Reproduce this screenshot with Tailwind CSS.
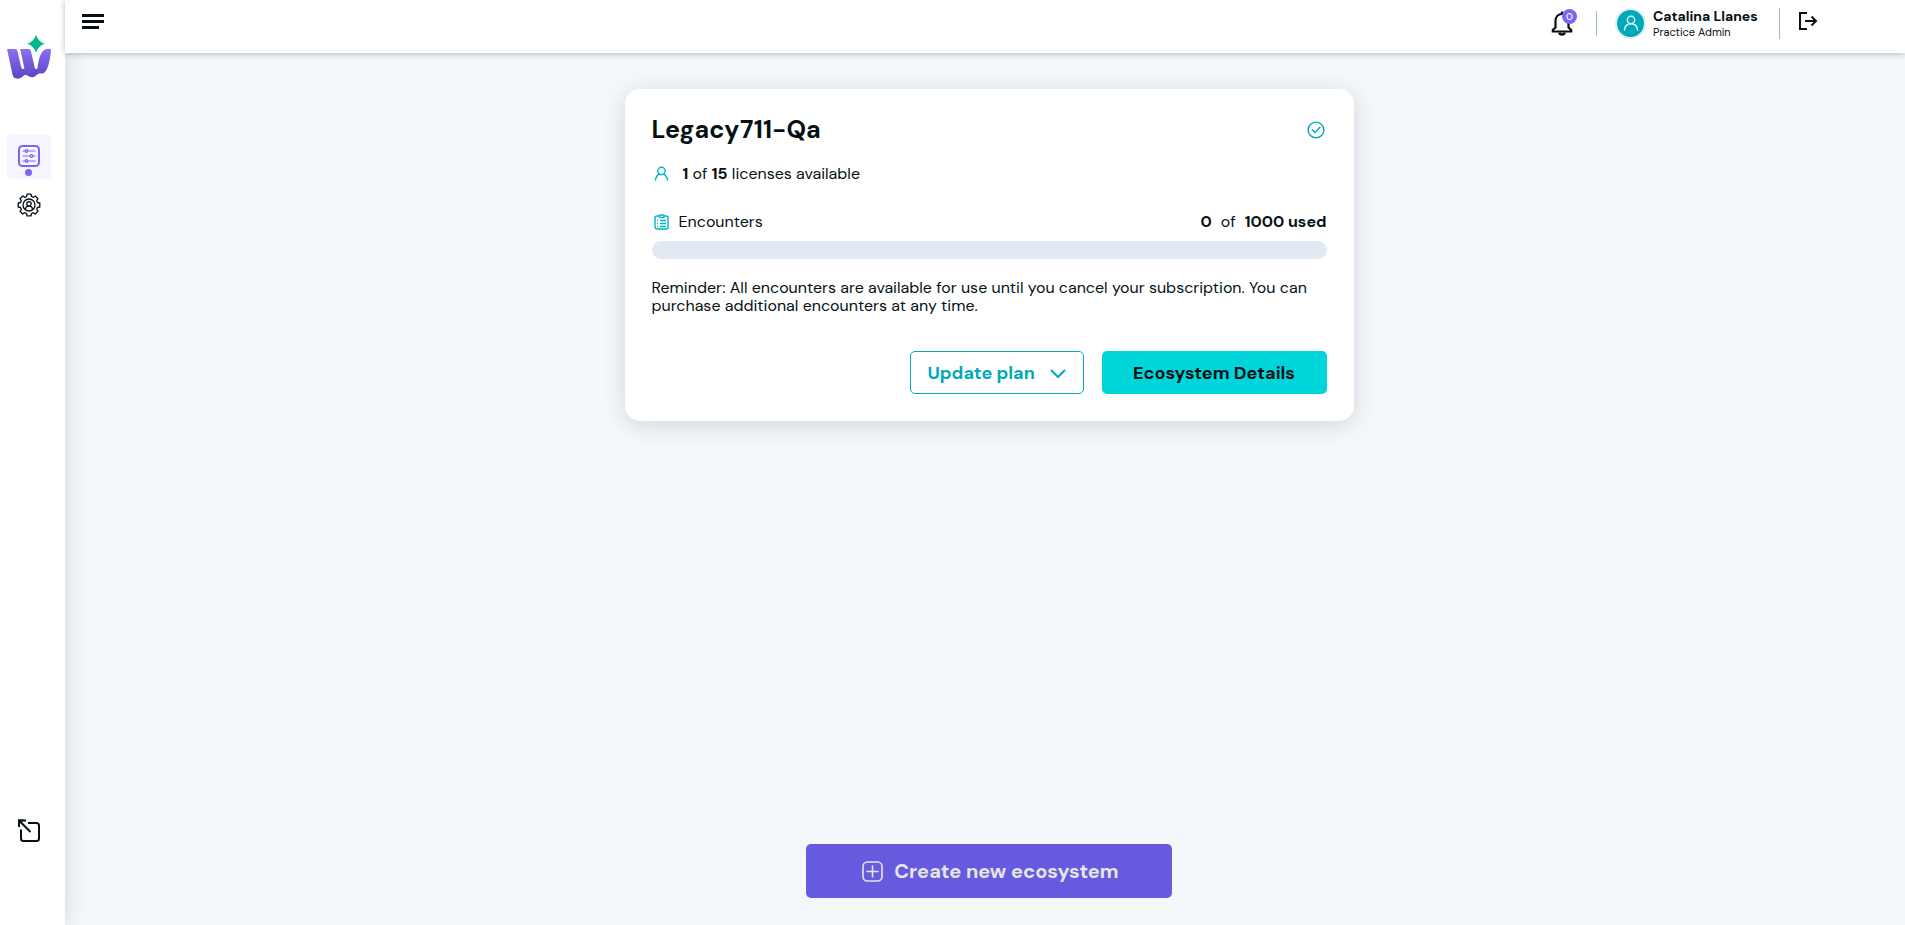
<!DOCTYPE html>
<html lang="en">
<head>
<meta charset="utf-8">
<meta name="viewport" content="width=device-width, initial-scale=1">
<title>Ecosystems</title>
<script src="https://cdn.jsdelivr.net/npm/@tailwindcss/browser@4"></script>
</head>
<body class="flex min-h-screen bg-[#f4f8fb] font-['DM_Sans','Inter',sans-serif] text-[#051114] antialiased">

<aside class="relative z-10 flex w-[65px] shrink-0 flex-col items-center bg-white pt-[34px] pb-[83px] shadow-[0_0_24px_rgba(5,17,20,0.14)]">
  <a href="#" aria-label="Home" class="block">
    <svg class="-ml-2 h-[46px] w-[46px]" viewBox="0 0 46 46">
      <defs><linearGradient id="brand" x1="0" y1="0" x2="0" y2="1"><stop offset="0" stop-color="#8a72f2"/><stop offset="1" stop-color="#6040c4"/></linearGradient></defs>
      <path fill="url(#brand)" d="M1 15H9.500Q11 15 11.400 17L15.300 33.500C15.700 35.300 17.800 35.200 18.400 34.400L14.200 15H23Q24.500 15 24.900 17L28.700 33.500C29.100 35.500 31 35.500 31.600 34C32.500 25 35 15 41 15H45C44.500 24 42.500 34.500 38.500 38.500C36.500 40.500 34 38.500 32 40C29.500 42 28 43.700 25.200 43.200C22.500 42.700 21 41 19.500 40.800C17.500 41 16 44.700 11.500 44.700C8.200 44.700 7 42.500 6.500 40.500Z"/>
      <path fill="#00b88e" d="M30 1C31.500 5.500 34.500 8.400 38.700 9.700C34.500 11 31.500 14 30 18.500C28.500 14 25.500 11 21.300 9.700C25.500 8.400 28.500 5.500 30 1Z"/>
    </svg>
  </a>
  <nav aria-label="Main" class="mr-2 mt-[54px] flex flex-1 flex-col items-center">
    <a href="#" aria-label="Ecosystems" aria-current="page" class="flex h-[45px] w-11 flex-col items-center gap-0.5 rounded bg-[#f6f4ff] pt-[11px]">
      <svg class="h-[22px] w-[22px] shrink-0" viewBox="0 0 22 22" fill="none" stroke="#7766f7" stroke-width="1.200" stroke-linecap="round"><rect x="1" y="1" width="20" height="20" rx="3.500" stroke-width="2"/><path d="M5 6h3M10 6h7M5 11h7M15 11h2M5 16h3M10 16h7"/><circle cx="8.500" cy="6" r="1.300"/><circle cx="13.500" cy="11" r="1.300"/><circle cx="8.500" cy="16" r="1.300"/></svg>
      <span class="h-[7px] w-[7px] shrink-0 rounded-full bg-[#7766f7]"></span>
    </a>
    <a href="#" aria-label="Settings" class="mt-[14px] block">
      <svg class="h-6 w-6" viewBox="-12 -12 24 24" fill="none" stroke="#051114" stroke-width="1.300" stroke-linejoin="round">
        <path d="M-2.500-8.500L-2-10.800H2L2.500-8.500L4.300-7.700L6.300-9L9-6.300L7.700-4.300L8.500-2.500L10.800-2V2L8.500 2.500L7.700 4.300L9 6.300L6.300 9L4.300 7.700L2.500 8.500L2 10.800H-2L-2.500 8.500L-4.300 7.700L-6.300 9L-9 6.300L-7.700 4.300L-8.500 2.500L-10.800 2V-2L-8.500-2.500L-7.700-4.300L-9-6.300L-6.300-9L-4.300-7.700Z"/>
        <circle r="6"/><circle cy="-1.200" r="2.200"/><path d="M-3.300 4.800V3.800Q-3.300 1.200 0 1.200T3.300 3.800V4.800"/>
      </svg>
    </a>
  </nav>
  <button type="button" aria-label="Leave workspace" class="mr-2 block">
    <svg class="h-6 w-6" viewBox="0 0 24 24" fill="none" stroke="#051114" stroke-width="2"><path d="M11 5H19.500Q22 5 22 7.500V20.500Q22 23 19.500 23H6.500Q4 23 4 20.500V11.500M13.500 14L2 2.500"/><path d="M2 9V2.500H9"/><path d="M1 1.500H7L1 7.500Z" fill="#051114" stroke="none"/></svg>
  </button>
</aside>

<div class="flex min-w-0 flex-1 flex-col">
  <header class="relative z-20 flex h-[53px] items-start bg-white pr-[87px] pl-[17px] shadow-[0_1px_6px_rgba(5,17,20,0.28)]">
    <button type="button" aria-label="Toggle menu" class="mt-[14px] flex flex-col gap-[3px]">
      <span class="h-[3px] w-[22px] bg-[#051114]"></span><span class="h-[3px] w-[22px] bg-[#051114]"></span><span class="h-[3px] w-[17px] bg-[#051114]"></span>
    </button>
    <div class="ml-auto flex h-[46px] items-center">
      <button type="button" aria-label="Notifications" class="relative">
        <svg class="h-[26px] w-[22px]" viewBox="0 0 22 26" fill="none" stroke="#051114" stroke-width="2.200"><path d="M1.800 21.500V20L4.500 17.500V11.500C4.500 6.500 7.500 4 11 4S17.500 6.500 17.500 11.500V17.500L20.200 20V21.500Z"/><path d="M11 1.500V4"/><path d="M8.500 22.500A2.500 2 0 0 0 13.500 22.500" stroke-width="2.500"/></svg>
        <span class="absolute -top-[1px] -right-[4px] flex h-[15px] w-[15px] items-center justify-center rounded-full bg-[#7766f7] text-[10px] leading-none font-medium text-white">0</span>
      </button>
      <span class="ml-[23px] h-[25px] w-px bg-[#9db9c8]"></span>
      <button type="button" class="ml-[18px] flex items-center text-left">
        <span class="flex h-[31px] w-[31px] items-center justify-center rounded-full border-2 border-[#e4eef3] bg-[#00a9b8]">
          <svg class="h-4 w-4" viewBox="0 0 16 16" fill="none" stroke="#e9fbfc" stroke-width="1.400" stroke-linecap="round"><circle cx="8" cy="5" r="3.700"/><path d="M1.500 15Q2 8.700 8 8.700T14.500 15"/></svg>
        </span>
        <span class="ml-[7px] w-[109px] whitespace-nowrap">
          <span class="block text-sm leading-[18px] font-bold">Catalina Llanes</span>
          <span class="block text-[11px] leading-[14px]">Practice Admin</span>
        </span>
      </button>
      <span class="ml-[17px] h-[31px] w-px bg-[#9db9c8]"></span>
      <button type="button" aria-label="Log out" class="mb-1 ml-[18px]">
        <svg class="h-5 w-5" viewBox="0 0 20 20" fill="none" stroke="#051114" stroke-width="2"><path d="M9 2H2V18H9M7 10H17M13.500 5.500L18 10L13.500 14.500"/></svg>
      </button>
    </div>
  </header>

  <main class="flex flex-1 flex-col items-center justify-between pt-9 pb-[27px] pl-2">
    <section class="w-full max-w-[729px] rounded-[15px] bg-white px-[27px] pt-[25px] pb-[27px] shadow-[0_4px_24px_rgba(5,17,20,0.14)]">
      <div class="flex items-center justify-between">
        <h1 class="text-[25px] leading-8 font-bold">Legacy711-Qa</h1>
        <svg class="mr-0.5 h-[18px] w-[18px]" viewBox="0 0 18 18" fill="none" stroke="#00a9b8" stroke-width="1.400"><circle cx="9" cy="9" r="7.900"/><path d="M5.300 8.700L8 11.500L13 6.300" stroke-linecap="round"/></svg>
      </div>
      <p class="mt-4 flex items-center text-base leading-6">
        <svg class="mr-[14px] ml-0.5 h-4 w-[15px]" viewBox="0 0 15 16" fill="none" stroke="#00b5c4" stroke-width="1.400" stroke-linecap="round"><circle cx="7.500" cy="5" r="3.700"/><path d="M1.500 14C2 10.500 4 8.700 5.500 8M9.500 8C11 8.700 13 10.500 13.500 14"/></svg>
        <span><b>1</b> of <b>15</b> licenses available</span>
      </p>
      <div class="mt-6 flex items-center text-base leading-6">
        <svg class="mr-2.5 ml-0.5 h-4 w-[15px]" viewBox="0 0 15 16" fill="none" stroke="#00b5c4" stroke-width="1.400"><rect x="1" y="2" width="13" height="13" rx="2"/><rect x="5" y="1" width="5" height="2.500" rx="1" fill="#fff"/><path d="M6 6.500h6M6 9.500h6M6 12.500h6M3 6.500h1M3 9.500h1M3 12.500h1"/></svg>
        <span id="usage">Encounters</span>
        <span class="ml-auto flex gap-[9px]"><b>0</b><span>of</span><b>1000 used</b></span>
      </div>
      <div role="progressbar" aria-labelledby="usage" aria-valuemin="0" aria-valuenow="0" aria-valuemax="1000" class="mt-[7px] h-[18px] rounded-full bg-[#e1eaf2]"></div>
      <p class="mt-5 text-base leading-[18px]">Reminder: All encounters are available for use until you cancel your subscription. You can purchase additional encounters at any time.</p>
      <div class="mt-9 flex justify-end gap-[18px] text-lg font-bold">
        <button type="button" aria-haspopup="menu" class="flex h-[43px] w-[174px] items-center justify-between rounded-[5px] border border-[#00a9b8] px-[17px] text-[#00a9b8]">Update plan
          <svg class="h-4 w-4" viewBox="0 0 16 16" fill="none" stroke="currentColor" stroke-width="2"><path d="M1 5L8 12L15 5"/></svg>
        </button>
        <button type="button" class="h-[43px] w-[225px] rounded-[5px] bg-[#00d5d9]">Ecosystem Details</button>
      </div>
    </section>
    <button type="button" class="flex h-[54px] w-[366px] items-center justify-center gap-[11px] rounded-[5px] bg-[#665bdf] pl-[3px] text-xl font-bold text-[#e6e6e6]">
      <svg class="h-[21px] w-[21px]" viewBox="0 0 21 21" fill="none" stroke="currentColor" stroke-width="1.600" stroke-linecap="round"><rect x="1" y="1" width="19" height="19" rx="4.500"/><path d="M10.500 5V16M5 10.500H16"/></svg>
      Create new ecosystem
    </button>
  </main>
</div>
</body>
</html>
